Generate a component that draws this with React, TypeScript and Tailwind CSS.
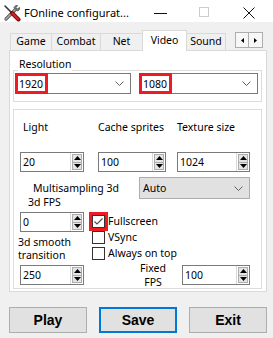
import React from "react";

const FONT = "font-['Noto_Sans',sans-serif]";

function AppIcon() {
  return (
    <svg width="18" height="18" viewBox="0 0 18 18">
      {/* wrench: bottom-left to top-right */}
      <path d="M3 15 L12.5 5.5" stroke="#5a5a5a" strokeWidth="3.2" strokeLinecap="round" />
      <path d="M3 15 L12.5 5.5" stroke="#a8a8a8" strokeWidth="1.6" strokeLinecap="round" />
      <path d="M11 3.5 Q12 1 14.5 1.5 L13 3.5 L14.5 5 L16.5 3.5 Q17 6 14.5 7 Z" fill="#8a8a8a" stroke="#444" strokeWidth="0.8" />
      {/* screwdriver: top-left to bottom-right */}
      <path d="M2 2 L9 9" stroke="#333" strokeWidth="1.6" strokeLinecap="round" />
      <path d="M9 9 L15.5 15.5" stroke="#7a0a0a" strokeWidth="4" strokeLinecap="round" />
      <path d="M9.5 9.5 L15 15" stroke="#d32020" strokeWidth="2.4" strokeLinecap="round" />
    </svg>
  );
}

function Chevron() {
  return (
    <svg width="9" height="5" viewBox="0 0 9 5">
      <path d="M0.5 0.5 L4.5 4.5 L8.5 0.5" fill="none" stroke="#606060" strokeWidth="1" />
    </svg>
  );
}

function Combo({
  w,
  value,
  red,
  gray,
}: {
  w: string;
  value: string;
  red?: boolean;
  gray?: boolean;
}) {
  return (
    <div
      className={`relative flex h-[21px] items-center ${w} ${
        gray ? "h-[22px] border border-[#adadad] bg-[#e1e1e1]" : "border border-[#7a7a7a] bg-white"
      }`}
    >
      <span className="flex-1 pl-[3px] leading-[16px]">{value}</span>
      <span className="mr-[6px] flex items-center">
        <Chevron />
      </span>
      {red && (
        <div className="absolute -left-px -top-px -bottom-px w-[33px] border-[3px] border-[#ed1c24]" />
      )}
    </div>
  );
}

function Tri({ up }: { up?: boolean }) {
  return (
    <svg width="7" height="4" viewBox="0 0 7 4">
      <path d={up ? "M0 4 L3.5 0 L7 4 Z" : "M0 0 L7 0 L3.5 4 Z"} fill="#000" />
    </svg>
  );
}

function Spin({ w, value }: { w: string; value: string }) {
  return (
    <div className={`flex h-[20px] border border-[#7a7a7a] bg-white ${w}`}>
      <div className="flex-1 pl-[2px] leading-[18px]">{value}</div>
      <div className="flex w-[13px] flex-col border-l border-[#d9d9d9] py-px pl-px pr-px">
        <div className="flex flex-1 items-center justify-center border border-[#adadad] bg-[#e5e5e5]">
          <Tri up />
        </div>
        <div className="flex flex-1 items-center justify-center border border-t-0 border-[#adadad] bg-[#e5e5e5]">
          <Tri />
        </div>
      </div>
    </div>
  );
}

function Check({ label, checked, red }: { label: string; checked?: boolean; red?: boolean }) {
  return (
    <div className="flex h-[16px] items-center">
      <div className="relative h-[13px] w-[13px] border border-[#333333] bg-white">
        {checked && (
          <svg className="absolute left-0 top-0" width="11" height="11" viewBox="0 0 11 11">
            <path d="M1.5 5.5 L4 8 L9.5 2.5" fill="none" stroke="#4d4d4d" strokeWidth="1.1" />
          </svg>
        )}
        {red && <div className="absolute -inset-[4px] border-[3px] border-[#ed1c24]" />}
      </div>
      <span className="ml-[3px] leading-[16px]">{label}</span>
    </div>
  );
}

function Tab({
  w,
  label,
  selected,
  first,
  last,
}: {
  w: string;
  label: string;
  selected?: boolean;
  first?: boolean;
  last?: boolean;
}) {
  if (selected) {
    return (
      <div
        className={`flex h-[21px] items-center justify-center border border-b-0 border-[#d9d9d9] bg-white pb-px ${w}`}
      >
        {label}
      </div>
    );
  }
  return (
    <div
      className={`flex h-[18px] items-center justify-center border-t border-b border-[#d9d9d9] bg-[#f0f0f0] ${
        first ? "border-l" : ""
      } ${last ? "border-r" : ""} ${!first && !last ? "border-l" : ""} ${w}`}
    >
      {label}
    </div>
  );
}

export default function App() {
  return (
    <div className={`h-[338px] w-[273px] overflow-hidden bg-[#f0f0f0] text-[10.5px] text-black ${FONT}`}>
      {/* title bar */}
      <div className="flex h-[22px] items-start bg-white">
        <div className="ml-[3px] mt-[4px]">
          <AppIcon />
        </div>
        <span className="ml-[3px] mt-[6px] text-[11px] leading-[14px]">FOnline configurat...</span>
        <div className="ml-auto mr-[18px] mt-[7px] flex items-start">
          <div className="mt-[6px] h-px w-[13px] bg-[#111]" />
          <div className="ml-[32px] h-[10px] w-[10px] border border-[#cccccc]" />
          <svg className="ml-[34px]" width="12" height="12" viewBox="0 0 12 12">
            <path d="M0.5 0.5 L11.5 11.5 M11.5 0.5 L0.5 11.5" stroke="#111" strokeWidth="1" />
          </svg>
        </div>
      </div>

      {/* tabs */}
      <div className="relative z-10 -mb-px flex h-[29px] items-end pl-[10px]">
        <Tab w="w-[41px]" label="Game" first />
        <Tab w="w-[49px]" label="Combat" />
        <Tab w="w-[42px]" label="Net" />
        <Tab w="w-[45px]" label="Video" selected />
        <Tab w="w-[39px]" label="Sound" last />
        <div className="ml-auto mr-[10px] mt-[10px] flex self-start">
          <div className="flex h-[16px] w-[14px] items-center justify-center border border-[#adadad] bg-[#f7f7f7]">
            <svg width="3" height="5" viewBox="0 0 3 5">
              <path d="M3 0 L0 2.5 L3 5 Z" fill="#000" />
            </svg>
          </div>
          <div className="flex h-[16px] w-[14px] items-center justify-center border border-l-0 border-[#adadad] bg-[#f7f7f7]">
            <svg width="3" height="5" viewBox="0 0 3 5">
              <path d="M0 0 L3 2.5 L0 5 Z" fill="#000" />
            </svg>
          </div>
        </div>
      </div>

      {/* tab panel */}
      <div className="ml-[9px] h-[242px] w-[258px] border border-[#d9d9d9] bg-white">
        {/* Resolution group */}
        <div className="relative ml-[3px] mt-[19px] h-[32px] w-[249px] border border-[#dcdcdc]">
          <span className="absolute left-[4px] top-[-15px] bg-white px-px leading-[16px]">Resolution</span>
          <div className="flex pl-px pt-[2px]">
            <Combo w="w-[116px]" value="1920" red />
            <div className="ml-[8px]">
              <Combo w="w-[119px]" value="1080" red />
            </div>
          </div>
        </div>

        {/* Lower group */}
        <div className="ml-[3px] mt-[7px] h-[180px] w-[249px] border border-[#dcdcdc]">
          <div className="mt-[9px] flex leading-[16px]">
            <span className="ml-[9px] w-[75px]">Light</span>
            <span className="w-[79px]">Cache sprites</span>
            <span>Texture size</span>
          </div>
          <div className="mt-[17px] flex">
            <div className="ml-[6px]">
              <Spin w="w-[64px]" value="20" />
            </div>
            <div className="ml-[14px]">
              <Spin w="w-[68px]" value="100" />
            </div>
            <div className="ml-[11px]">
              <Spin w="w-[73px]" value="1024" />
            </div>
          </div>
          <div className="mt-[5px] flex h-[22px] items-start">
            <span className="ml-[19px] mt-[3px] w-[106px] whitespace-nowrap leading-[16px]">Multisampling 3d</span>
            <Combo w="w-[111px]" value="Auto" gray />
          </div>
          <div className="-mt-[4px] flex items-start">
            <div className="ml-[6px] flex w-[64px] flex-col">
              <span className="h-[14px] pl-[8px] leading-[14px]">3d FPS</span>
              <div className="mt-[3px]">
                <Spin w="w-[64px]" value="0" />
              </div>
              <span className="-ml-[2px] mt-[4px] whitespace-nowrap leading-[13px]">
                3d smooth
                <br />
                transition
              </span>
            </div>
            <div className="ml-[8px] mt-[18px] flex flex-col">
              <Check label="Fullscreen" checked red />
              <Check label="VSync" />
              <Check label="Always on top" />
            </div>
          </div>
          <div className="mt-[3px] flex h-[20px] items-center">
            <div className="ml-[6px]">
              <Spin w="w-[64px]" value="250" />
            </div>
            <span className="ml-[53px] w-[32px] whitespace-nowrap text-center leading-[14px]">
              Fixed
              <br />
              FPS
            </span>
            <div className="ml-[13px]">
              <Spin w="w-[68px]" value="100" />
            </div>
          </div>
        </div>
      </div>

      {/* buttons */}
      <div className="ml-[9px] mt-[15px] flex font-['Liberation_Sans',sans-serif] text-[14px] font-bold">
        <div className="flex h-[26px] w-[78px] items-center justify-center border border-[#adadad] bg-[#e1e1e1]">
          Play
        </div>
        <div className="ml-[12px] flex h-[26px] w-[78px] items-center justify-center border-2 border-[#0078d7] bg-[#e1e1e1]">
          Save
        </div>
        <div className="ml-[12px] flex h-[26px] w-[78px] items-center justify-center border border-[#adadad] bg-[#e1e1e1]">
          Exit
        </div>
      </div>
    </div>
  );
}
